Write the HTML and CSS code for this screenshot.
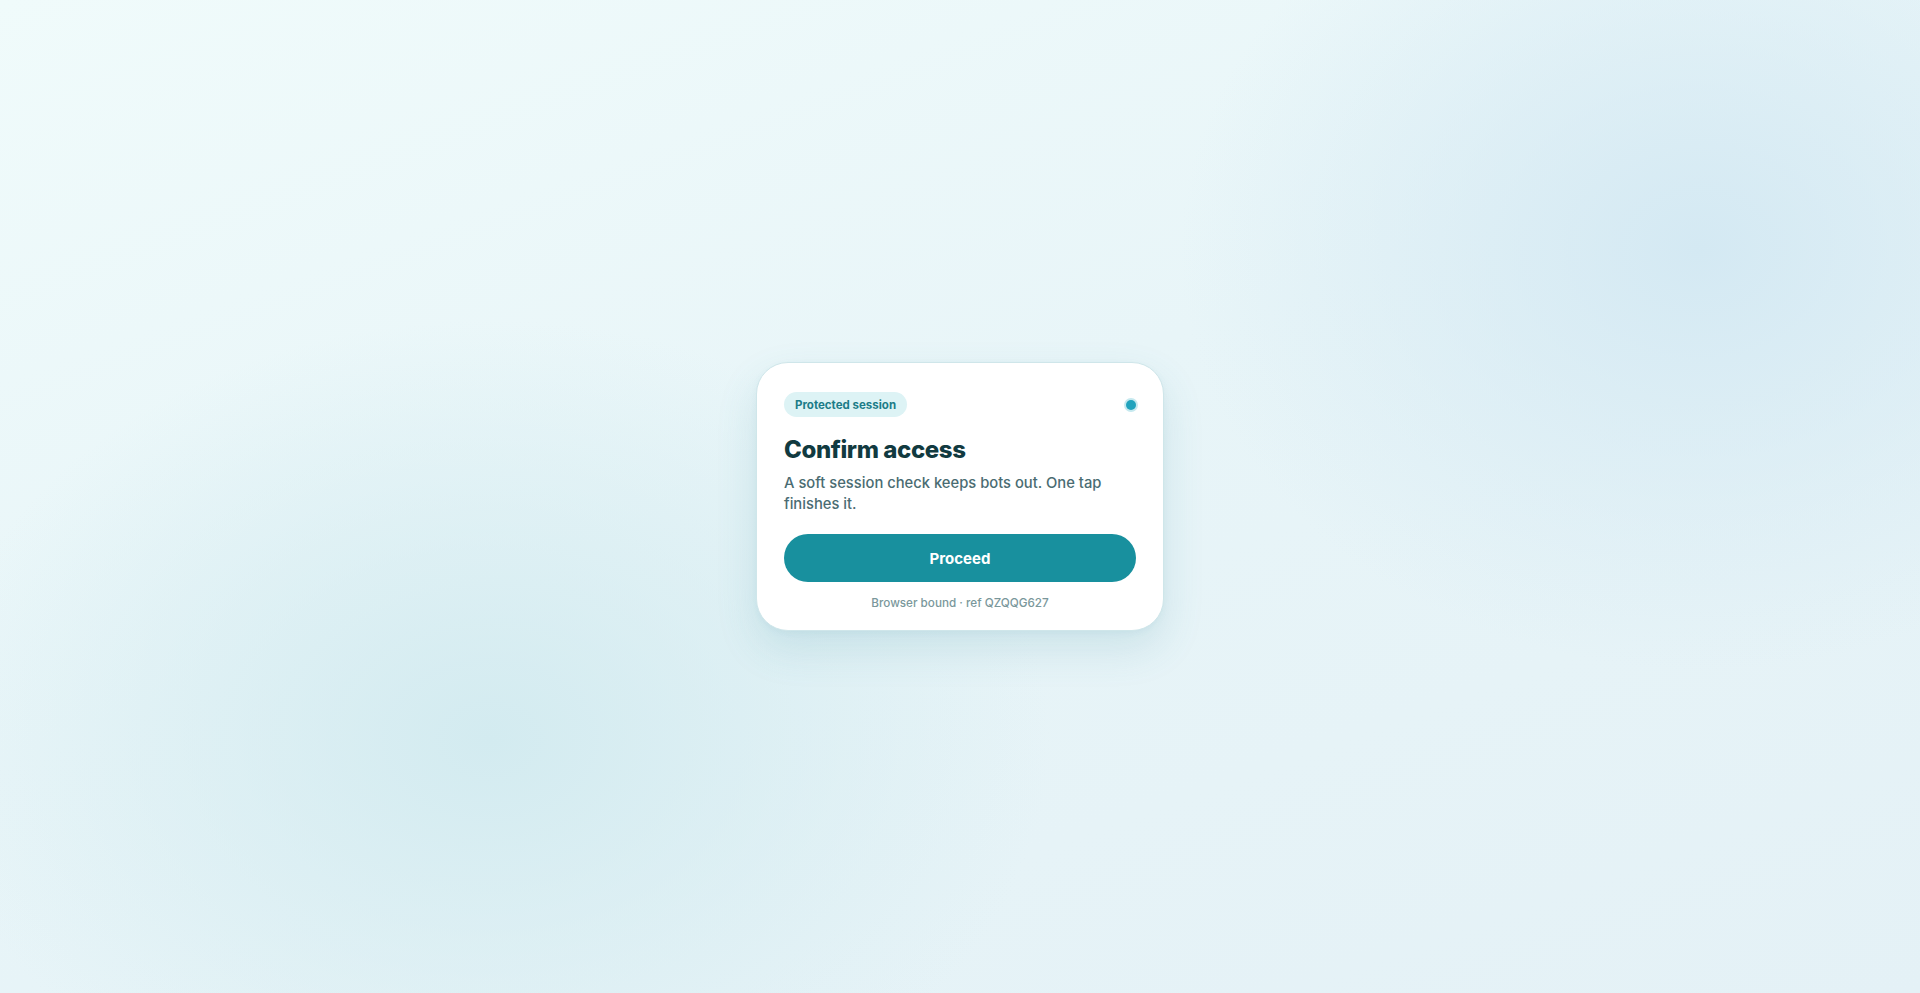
FILE: index.html
```html
<!DOCTYPE html>
<html lang="en">
<head>
<meta charset="utf-8">
<title>Confirm access</title>
<link rel="stylesheet" href="styles.css">
</head>
<body>
<main class="stage">
  <section class="card">
    <div class="card-top">
      <span class="pill">Protected session</span>
      <span class="dot"></span>
    </div>
    <h1 class="title">Confirm access</h1>
    <p class="lead">A soft session check keeps bots out. One tap finishes it.</p>
    <button class="btn" type="button">Proceed</button>
    <p class="foot">Browser bound · ref QZQQG627</p>
  </section>
</main>
</body>
</html>
```
FILE: styles.css
```css
* { box-sizing: border-box; }
html, body { margin: 0; height: 100%; }
body {
  font-family: "Inter", "Noto Sans", sans-serif;
  background-color: #e6f3f6;
  background-image:
    radial-gradient(ellipse 520px 420px at 1700px 250px, #d4e9f3 0%, rgba(212,233,243,0) 100%),
    radial-gradient(ellipse 560px 420px at 490px 740px, #d3ebf0 0%, rgba(211,235,240,0) 100%),
    linear-gradient(160deg, #f0fbfb 0%, #e8f5f8 45%, #e4f1f6 100%);
}
.stage {
  height: 993px;
  display: flex;
  align-items: center;
  justify-content: center;
}
.card {
  width: 408px;
  background: #ffffff;
  border: 1px solid #cfe6ea;
  border-radius: 32px;
  padding: 29px 27px 19px;
  box-shadow: 0 18px 40px rgba(60, 140, 160, 0.16), 0 2px 6px rgba(60, 140, 160, 0.06);
  display: flex;
  flex-direction: column;
}
.card-top {
  display: flex;
  align-items: center;
  justify-content: space-between;
}
.pill {
  display: inline-flex;
  align-items: center;
  height: 25px;
  padding: 0 11px;
  border-radius: 13px;
  background: #ddf3f5;
  color: #1b7c88;
  font-size: 11.5px;
  font-weight: 700;
}
.dot {
  width: 10px;
  height: 10px;
  border-radius: 50%;
  background: #21a3bd;
  box-shadow: 0 0 0 2px #c6e9ef;
  margin-right: 0;
}
.title {
  margin: 17px 0 0;
  font-size: 24px;
  line-height: 32px;
  font-weight: 800;
  color: #113a40;
  letter-spacing: -0.4px;
}
.lead {
  margin: 7px 0 0;
  font-size: 14.75px;
  line-height: 21px;
  color: #4a6c72;
  font-weight: 500;
}
.btn {
  margin-top: 19px;
  height: 48px;
  width: 100%;
  border: 0;
  border-radius: 24px;
  background: #18909e;
  color: #ffffff;
  font-family: inherit;
  font-size: 15px;
  font-weight: 700;
  cursor: pointer;
}
.foot {
  margin: 13px 0 0;
  text-align: center;
  font-size: 11.7px;
  line-height: 16px;
  color: #7a979b;
  font-weight: 500;
}
```
